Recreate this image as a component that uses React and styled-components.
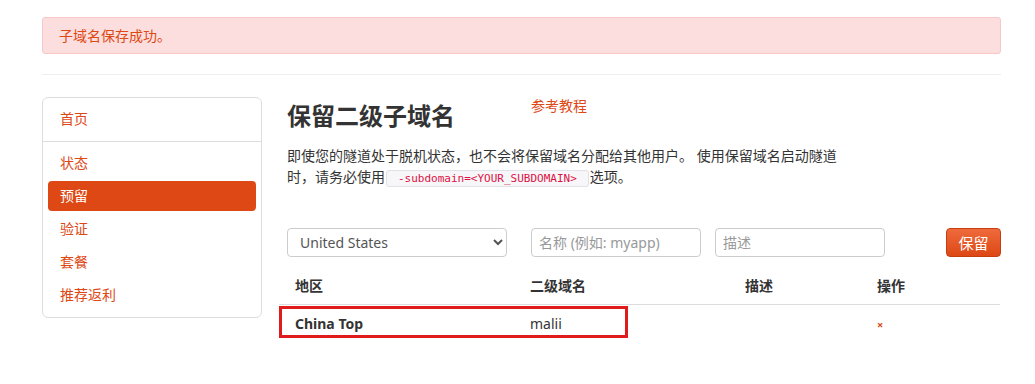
import React from 'react';
import styled, { createGlobalStyle } from 'styled-components';

const GlobalStyle = createGlobalStyle`
    body {
        margin: 0;
        background: #fff;
        font-family: "Noto Sans", "Noto Sans CJK SC", sans-serif;
        font-size: 14px;
        color: #333;
    }
`;

const ORANGE = '#dd4814';

const Page = styled.div`
    width: 959px;
    padding: 17px 0 0 42px;
`;

const Alert = styled.div`
    height: 35px;
    line-height: 35px;
    padding: 0 16px;
    background: #fbdedd;
    border: 1px solid #f6c8c8;
    border-radius: 3px;
    color: ${ORANGE};
    font-size: 14px;
`;

const Divider = styled.hr`
    margin: 20px 0 21px;
    border: 0;
    border-top: 1px solid #eee;
`;

const Layout = styled.div`
    display: flex;
    align-items: flex-start;
    padding-top: 1px;
`;

const Sidebar = styled.ul`
    list-style: none;
    margin: 0;
    padding: 6px 5px 4px;
    width: 210px;
    border: 1px solid #ddd;
    border-radius: 6px;
`;

const NavItem = styled.li`
    height: 30px;
    line-height: 30px;
    padding: 0 12px;
    margin-bottom: 3px;
    border-radius: 4px;
    color: ${p => (p.$active ? '#fff' : ORANGE)};
    background: ${p => (p.$active ? ORANGE : 'transparent')};
`;

const NavDivider = styled.li`
    height: 1px;
    background: #ddd;
    margin: 7px -5px 6px;
`;

const Content = styled.div`
    flex: 1;
    padding-left: 25px;
`;

const TitleRow = styled.div`
    display: flex;
    align-items: flex-start;
`;

const Title = styled.h2`
    margin: 0;
    width: 244px;
    font-size: 24px;
    line-height: 38px;
    font-weight: 700;
    color: #333;
`;

const Tutorial = styled.a`
    font-size: 14px;
    color: ${ORANGE};
    line-height: 18px;
`;

const Para = styled.p`
    margin: 10px 0 0;
    width: 560px;
    line-height: 21px;
    font-size: 14px;
    color: #333;
`;

const Code = styled.code`
    font-family: "DejaVu Sans Mono", monospace;
    font-size: 11px;
    line-height: 14px;
    color: #d14;
    background: #f7f7f9;
    border: 1px solid #e1e1e8;
    border-radius: 3px;
    padding: 1px 11px;
    margin: 0 1px;
`;

const Form = styled.div`
    display: flex;
    align-items: center;
    margin-top: 41px;
`;

const Select = styled.select`
    width: 220px;
    height: 29px;
    border: 1px solid #ccc;
    border-radius: 4px;
    padding: 0 8px;
    font-family: inherit;
    font-size: 14px;
    color: #555;
    background: #fff;
    margin-right: 24px;
`;

const Input = styled.input`
    width: ${p => p.$w}px;
    height: 29px;
    box-sizing: border-box;
    border: 1px solid #ccc;
    border-radius: 4px;
    padding: 0 7px;
    font-family: inherit;
    font-size: 14px;
    margin-right: ${p => p.$mr}px;
    &::placeholder { color: #999; }
`;

const Button = styled.button`
    height: 29px;
    width: 55px;
    border: 1px solid #c43e10;
    border-radius: 4px;
    background: linear-gradient(#ef6a3c, #dd4814);
    color: #fff;
    font-family: inherit;
    font-size: 15px;
`;

const TableBox = styled.div`
    position: relative;
    margin-left: -8px;
    margin-top: 7px;
`;

const Table = styled.table`
    width: 721px;
    border-collapse: collapse;
    font-size: 14px;
`;

const Th = styled.th`
    text-align: left;
    font-weight: 700;
    height: 38px;
    padding: 2px 0 0 16px;
    border-bottom: 1px solid #ddd;
    width: ${p => p.$w}px;
`;

const Td = styled.td`
    padding: 0 0 0 16px;
    height: 36px;
    font-weight: ${p => (p.$bold ? 700 : 400)};
`;

const Remove = styled.span`
    color: ${ORANGE};
    font-size: 11px;
    font-weight: 700;
`;

const RedFrame = styled.div`
    position: absolute;
    left: 0;
    top: 42px;
    width: 343px;
    height: 26px;
    border: 3px solid #e01b1b;
    pointer-events: none;
`;

const App = () => {
    return (
        <Page>
            <GlobalStyle />
            <Alert>子域名保存成功。</Alert>
            <Divider />
            <Layout>
                <Sidebar>
                    <NavItem>首页</NavItem>
                    <NavDivider />
                    <NavItem>状态</NavItem>
                    <NavItem $active>预留</NavItem>
                    <NavItem>验证</NavItem>
                    <NavItem>套餐</NavItem>
                    <NavItem>推荐返利</NavItem>
                </Sidebar>
                <Content>
                    <TitleRow>
                        <Title>保留二级子域名</Title>
                        <Tutorial>参考教程</Tutorial>
                    </TitleRow>
                    <Para>
                        即使您的隧道处于脱机状态，也不会将保留域名分配给其他用户。 使用保留域名启动隧道时，请务必使用<Code>-subdomain=&lt;YOUR_SUBDOMAIN&gt;</Code>选项。
                    </Para>
                    <Form>
                        <Select defaultValue="us">
                            <option value="us">United States</option>
                        </Select>
                        <Input $w={170} $mr={14} placeholder="名称 (例如: myapp)" />
                        <Input $w={170} $mr={61} placeholder="描述" />
                        <Button>保留</Button>
                    </Form>
                    <TableBox>
                        <Table>
                            <thead>
                                <tr>
                                    <Th $w={219}>地区</Th>
                                    <Th $w={199}>二级域名</Th>
                                    <Th $w={116}>描述</Th>
                                    <Th>操作</Th>
                                </tr>
                            </thead>
                            <tbody>
                                <tr>
                                    <Td $bold>China Top</Td>
                                    <Td>malii</Td>
                                    <Td></Td>
                                    <Td><Remove>×</Remove></Td>
                                </tr>
                            </tbody>
                        </Table>
                        <RedFrame />
                    </TableBox>
                </Content>
            </Layout>
        </Page>
    );
};

export default App;
